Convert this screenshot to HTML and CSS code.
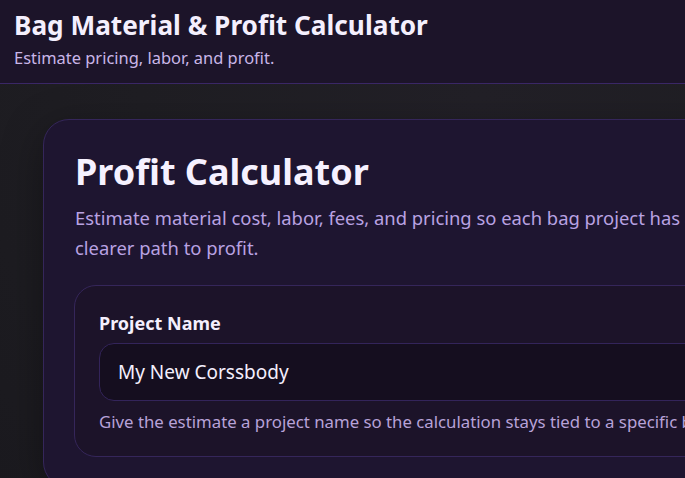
FILE: index.html
```html
<!DOCTYPE html>
<html lang="en">
<head>
<meta charset="utf-8">
<title>Bag Material &amp; Profit Calculator</title>
<link rel="stylesheet" href="styles.css">
</head>
<body>
<header class="topbar">
  <h1 class="topbar-title">Bag Material &amp; Profit Calculator</h1>
  <p class="topbar-sub">Estimate pricing, labor, and profit.</p>
</header>
<main class="page">
  <section class="card">
    <h2 class="card-title">Profit Calculator</h2>
    <p class="card-lead">Estimate material cost, labor, fees, and pricing so each bag project has a clearer path to profit.</p>
    <div class="panel">
      <label class="field-label" for="project-name">Project Name</label>
      <input class="field-input" id="project-name" type="text" value="My New Corssbody">
      <p class="field-hint">Give the estimate a project name so the calculation stays tied to a specific bag design.</p>
    </div>
  </section>
</main>
</body>
</html>
```

FILE: styles.css
```css
* { box-sizing: border-box; }
html, body { margin: 0; padding: 0; overflow: hidden; }
body {
  font-family: "Noto Sans", "Open Sans", sans-serif;
  background: radial-gradient(ellipse at 70% 20%, #222027 0%, #1f1e23 50%, #1b1a1f 100%);
  color: #f3eefc;
  min-height: 478px;
}
.topbar {
  background: #1c1429;
  border-bottom: 1px solid #3a2766;
  padding: 8px 14px 0;
  height: 84px;
}
.topbar-title {
  margin: 0;
  font-size: 26.2px;
  font-weight: 700;
  line-height: 34px;
  color: #f4effd;
}
.topbar-sub {
  margin: 5px 0 0;
  font-size: 16.45px;
  line-height: 22px;
  color: #c9b6e8;
}
.page {
  padding: 35px 0 0 43px;
}
.card {
  width: 780px;
  background: #1e1530;
  border: 1px solid #35265a;
  border-radius: 26px;
  padding: 26px 31px 30px;
  box-shadow: 0 10px 40px rgba(0, 0, 0, 0.35);
}
.card-title {
  margin: 0;
  font-size: 36px;
  font-weight: 700;
  line-height: 52px;
  color: #f6f1ff;
}
.card-lead {
  margin: 5px 0 0;
  font-size: 18.4px;
  line-height: 30px;
  color: #b9a2e2;
  max-width: 622px;
}
.panel {
  margin-top: 22px;
  margin-left: -1px;
  background: #1c1329;
  border: 1px solid #35265a;
  border-radius: 22px;
  padding: 25px 24px 22px;
}
.field-label {
  display: block;
  font-size: 18px;
  font-weight: 700;
  line-height: 24px;
  color: #f4effd;
}
.field-input {
  display: block;
  width: 100%;
  margin-top: 8px;
  height: 58px;
  padding: 0 18px;
  background: #150e1f;
  border: 1px solid #33245a;
  border-radius: 15px;
  font-family: inherit;
  font-size: 19px;
  color: #f4effd;
  outline: none;
}
.field-hint {
  margin: 9px 0 0;
  font-size: 16.8px;
  line-height: 24px;
  color: #b7a2d8;
  white-space: nowrap;
}
```
